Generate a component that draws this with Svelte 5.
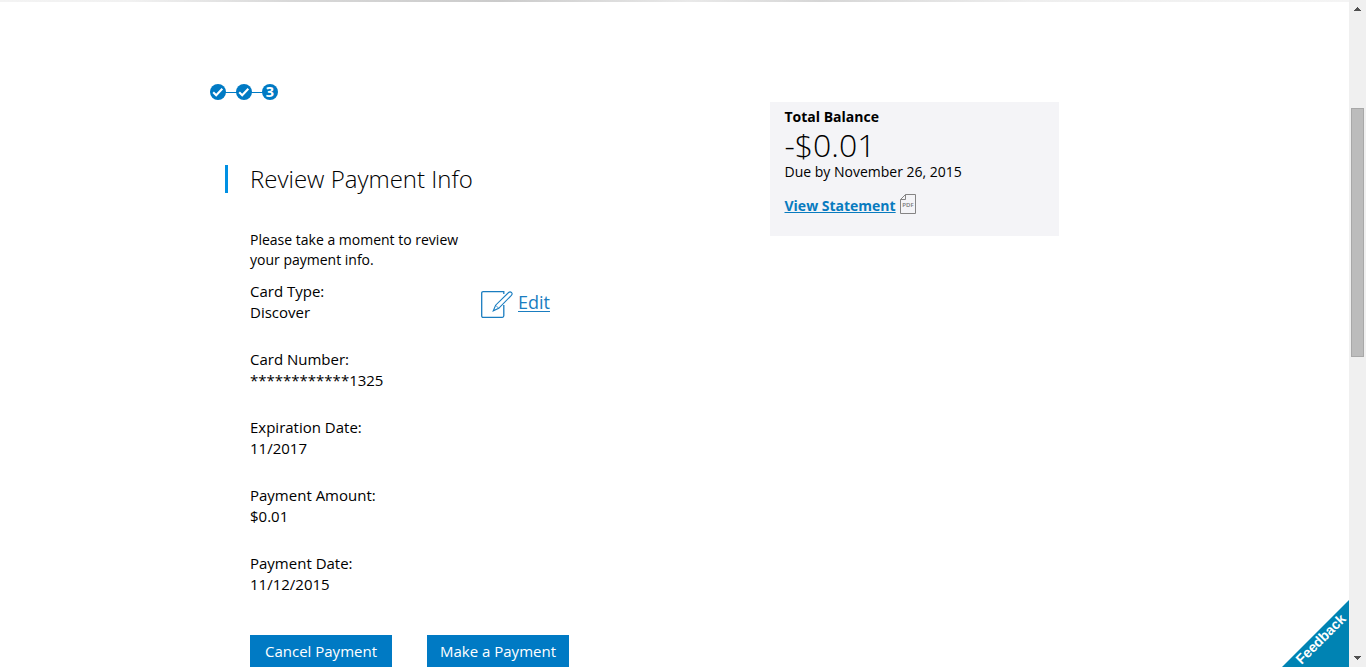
<script>
  const details = [
    ['Card Type:', 'Discover'],
    ['Card Number:', '************1325'],
    ['Expiration Date:', '11/2017'],
    ['Payment Amount:', '$0.01'],
    ['Payment Date:', '11/12/2015']
  ];
</script>

<div class="window">
  <div class="page">
    <div class="top-shadow"></div>
    <div class="content">
      <main>
        <svg class="steps" width="70" height="18" viewBox="0 0 70 18" role="img" aria-label="Step 3">
          <path d="M9 9.5H61" stroke="#007ac4" />
          <circle cx="9" cy="9" r="8" fill="#007ac4" />
          <circle cx="35" cy="9" r="8" fill="#007ac4" />
          <circle cx="61" cy="9" r="8" fill="#007ac4" />
          <path d="M4.2 9.3L7.2 12.2L13.3 5.8M30.2 9.3L33.2 12.2L39.3 5.8" fill="none" stroke="#fff" stroke-width="2.1" />
          <text x="61" y="14" text-anchor="middle">3</text>
        </svg>
        <h1>Review Payment Info</h1>
        <p class="intro">Please take a moment to review<br />your payment info.</p>
        <div class="review">
          <dl>
            {#each details as [label, value]}
              <div class="detail"><dt>{label}</dt><dd>{value}</dd></div>
            {/each}
          </dl>
          <a class="edit" href="#edit">
            <svg width="33" height="28" viewBox="0 0 33 28" fill="none" stroke="#1a7dc0" stroke-width="1.3">
              <path d="M22.8 14V24.8Q22.8 26.3 21.3 26.3H2.2Q.7 26.3.7 24.8V2.2Q.7.7 2.2.7H22.8V3" />
              <path d="M12.3 19.8L14.6 14.2L27.6 1.5Q29.1.2 30.5 1.5Q31.8 2.9 30.4 4.4L17.7 17.3Z" fill="#fff" stroke-width="1.1" />
              <path d="M14.6 14.2L17.7 17.3" stroke-width=".8" />
            </svg>
            <span>Edit</span>
          </a>
        </div>
        <div class="actions">
          <button>Cancel Payment</button>
          <button>Make a Payment</button>
        </div>
      </main>
      <aside>
        <strong>Total Balance</strong>
        <div class="amount">-$0.01</div>
        <div class="due">Due by November 26, 2015</div>
        <a class="statement" href="#statement">
          <span>View Statement</span>
          <svg width="16" height="20" viewBox="0 0 16 20" fill="none" stroke="#858484">
            <path d="M5.5.5H15.5V19.5H.5V5.5ZM5.5.5V5.5H.5" />
            <text x="8" y="13" text-anchor="middle">PDF</text>
          </svg>
        </a>
      </aside>
    </div>
    <svg class="feedback" width="67" height="67" viewBox="0 0 67 67">
      <path d="M67 0V67H0Z" fill="#0083b3" />
      <text transform="translate(19.5 65) rotate(-45)" textLength="64">Feedback</text>
    </svg>
  </div>
  <div class="scrollbar">
    <svg class="arrow" width="7" height="4" viewBox="0 0 7 4"><path d="M3 0H4V1H5V2H6V3H7V4H0V3H1V2H2V1H3Z" /></svg>
    <div class="thumb"></div>
    <svg class="arrow down" width="7" height="4" viewBox="0 0 7 4"><path d="M0 0H7V1H6V2H5V3H4V4H3V3H2V2H1V1H0Z" /></svg>
  </div>
</div>

<style>
  :global(body) { margin: 0; overflow: hidden; }
  .window { display: flex; width: 1366px; height: 667px; overflow: hidden; background: #fff; color: #000; font: 14px/20px "Open Sans", sans-serif; }
  .page { position: relative; width: 1349px; overflow: hidden; }
  .top-shadow { height: 2px; background: linear-gradient(90deg, #f3f3f3 0, #f1f1f1 130px, #d8d8d8 290px, #cbcbcb 500px, #e9e9e9 690px, #d6d6d6 820px, #eee 1030px, #f4f4f4 100%); }
  .content { display: flex; align-items: flex-start; padding-left: 209px; }
  main { width: 561px; padding-top: 81px; }
  .steps { display: block; }
  .steps text { fill: #fff; font: 700 14.5px "Open Sans", sans-serif; }
  h1 { box-sizing: border-box; height: 28px; margin: 64px 0 0 16px; padding-left: 22px; border-left: 3px solid #0090e3; font-size: 24px; font-weight: 300; line-height: 28px; white-space: nowrap; }
  .intro { margin: 37px 0 0 41px; }
  .review { display: flex; margin: 11px 0 0 41px; }
  dl { width: 231px; margin: 0; font-size: 15px; line-height: 21px; }
  .detail { height: 68px; }
  dd { margin: 0; }
  .edit { display: flex; align-items: flex-start; height: 30px; margin-top: 9px; color: #1a7dc0; font-size: 18px; line-height: 24px; }
  .edit svg { margin-top: 1px; }
  .edit span { margin-left: 4px; }
  a { text-decoration: none; }
  a span { text-decoration: underline; text-decoration-thickness: 1px; text-underline-offset: 2px; }
  .actions { display: flex; gap: 35px; margin: 14px 0 0 41px; }
  button { width: 142px; height: 33px; padding: 0; border: 0; border-radius: 0; background: #007ac4; color: #fff; font: 15px/33px "Open Sans", sans-serif; }
  aside { box-sizing: border-box; width: 289px; height: 134px; margin-top: 100px; padding: 5px 14.5px; background: #f4f4f7; }
  strong { display: block; font-weight: 700; }
  .amount { height: 35px; font-size: 32px; font-weight: 300; line-height: 35px; }
  .statement { display: flex; height: 28px; margin-top: 10px; color: #087bbf; font-weight: 700; }
  .statement span { margin-top: 4px; text-underline-offset: 1px; }
  .statement svg { margin: 2px 0 0 4.5px; }
  .statement text { fill: #777; stroke: none; font: 600 6px "Open Sans", sans-serif; }
  .feedback { position: absolute; right: 0; bottom: 0; }
  .feedback text { fill: #fff; font: 700 14px "Liberation Sans", sans-serif; }
  .scrollbar { display: flex; flex-direction: column; align-items: center; box-sizing: border-box; width: 17px; height: 667px; padding: 7px 0; background: #f0f0f0; }
  .arrow { flex: none; fill: #505050; }
  .thumb { box-sizing: border-box; width: 13px; height: 249px; margin-top: 97px; border: 1px solid #a8a8a8; background: #bcbcbc; }
  .down { margin-top: auto; }
</style>
